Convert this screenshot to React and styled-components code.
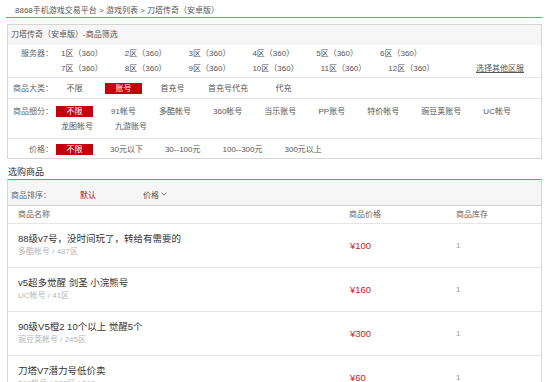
import React from "react"
import styled, { createGlobalStyle } from "styled-components"

const colors = {
  text: "#333",
  body: "#555",
  label: "#666",
  light: "#b5b5b5",
  border: "#d6d6d6",
  line: "#e6e6e6",
  red: "#c4000b",
  price: "#c41a20",
  headBg: "#f6f6f6",
}

const serverLines = [
  ["1区（360）", "2区（360）", "3区（360）", "4区（360）", "5区（360）", "6区（360）"],
  ["7区（360）", "8区（360）", "9区（360）", "10区（360）", "11区（360）", "12区（360）"],
]

const filterRows = [
  {
    label: "商品大类：",
    pad: "3px 0 2px",
    items: ["不限", "账号", "首充号", "首充号代充", "代充"],
    active: 1,
  },
  {
    label: "商品细分：",
    pad: "5px 0 4px",
    items: [
      "不限", "91帐号", "多酷帐号", "360帐号", "当乐账号", "PP账号",
      "特价帐号", "豌豆荚账号", "UC帐号", "龙图帐号", "九游账号",
    ],
    active: 0,
  },
  {
    label: "价格：",
    pad: "3px 0 1px",
    items: ["不限", "30元以下", "30--100元", "100--300元", "300元以上"],
    active: 0,
  },
]

const goods = [
  { title: "88级v7号，没时间玩了，转给有需要的", sub: "多酷帐号 / 487区", price: "¥100", stock: 1 },
  { title: "v5超多觉醒 剑圣 小浣熊号", sub: "UC帐号 / 41区", price: "¥160", stock: 1 },
  { title: "90级V5橙2 10个以上 觉醒5个", sub: "豌豆荚帐号 / 245区", price: "¥300", stock: 1 },
  { title: "刀塔V7潜力号低价卖", sub: "360帐号 / 332区 / 360 ", price: "¥60", stock: 1 },
]

const ChevronDown = () => (
  <svg width="6" height="4" viewBox="0 0 6 4">
    <polyline points="0.5,0.8 3,3.2 5.5,0.8" fill="none" stroke="#777" strokeWidth="1" />
  </svg>
)

const App = () => {
  return (
    <>
      <GlobalStyle />
      <Page>
        <Breadcrumb>8868手机游戏交易平台 &gt; 游戏列表 &gt; 刀塔传奇（安卓版）</Breadcrumb>

        <FilterBox>
          <FilterHead>刀塔传奇（安卓版）-商品筛选</FilterHead>
          <FilterRow $pad="1px 0 1px">
            <Label>服务器：</Label>
            <ServerLines>
              {serverLines.map((line, i) => (
                <ServerLine key={i}>
                  {line.map((s) => (
                    <ServerItem key={s}>{s}</ServerItem>
                  ))}
                  {i === 1 && <ServerLink>选择其他区服</ServerLink>}
                </ServerLine>
              ))}
            </ServerLines>
          </FilterRow>
          {filterRows.map((row) => (
            <FilterRow key={row.label} $pad={row.pad}>
              <Label>{row.label}</Label>
              <Tags>
                {row.items.map((t, i) => (
                  <Tag key={t} $active={i === row.active}>
                    {t}
                  </Tag>
                ))}
              </Tags>
            </FilterRow>
          ))}
        </FilterBox>

        <SectionTitle>选购商品</SectionTitle>
        <ListBox>
          <SortBar>
            <SortLabel>商品排序：</SortLabel>
            <SortOption $active>默认</SortOption>
            <SortOption>
              价格 <ChevronDown />
            </SortOption>
          </SortBar>
          <HeadRow>
            <HeadCell $first>商品名称</HeadCell>
            <HeadCell>商品价格</HeadCell>
            <HeadCell>商品库存</HeadCell>
          </HeadRow>
          {goods.map((g) => (
            <GoodsRow key={g.title}>
              <NameCell>
                <GoodsTitle>{g.title}</GoodsTitle>
                <GoodsSub>{g.sub}</GoodsSub>
              </NameCell>
              <Price>{g.price}</Price>
              <Stock>{g.stock}</Stock>
            </GoodsRow>
          ))}
        </ListBox>
      </Page>
    </>
  )
}

export default App

const GlobalStyle = createGlobalStyle`
  html, body {
    margin: 0;
    padding: 0;
    background: #fff;
  }
  body {
    font-family: "Liberation Sans", "Noto Sans CJK SC", sans-serif;
    font-size: 8px;
    color: ${colors.body};
  }
`
const Page = styled.div`
  width: 554px;
  height: 382px;
  overflow: hidden;
  box-sizing: border-box;
  padding: 0 12px 0 7px;
`
const Breadcrumb = styled.div`
  height: 13px;
  padding: 4px 0 0 9px;
  line-height: 13px;
  font-size: 8px;
  color: ${colors.body};
  border-bottom: 1px solid #d8716f;
  margin-left: -1px;
`
const FilterBox = styled.div`
  margin-top: 6px;
  border: 1px solid ${colors.border};
`
const FilterHead = styled.div`
  height: 20px;
  line-height: 20px;
  padding-left: 3px;
  background: ${colors.headBg};
  color: ${colors.body};
`
const FilterRow = styled.div`
  display: flex;
  align-items: flex-start;
  padding: ${(p) => p.$pad};
  border-bottom: 1px solid ${colors.line};
  &:last-child {
    border-bottom: none;
  }
`
const Label = styled.div`
  width: 45px;
  flex-shrink: 0;
  text-align: right;
  line-height: 15px;
  color: ${colors.label};
`
const ServerLines = styled.div`
  flex: 1;
  margin-left: 3px;
`
const ServerLine = styled.div`
  display: flex;
  line-height: 15px;
`
const ServerItem = styled.span`
  padding: 0 5px;
  margin-right: 12px;
  white-space: nowrap;
`
const ServerLink = styled.a`
  margin-left: auto;
  margin-right: 17px;
  color: ${colors.body};
  text-decoration: underline;
`
const Tags = styled.div`
  flex: 1;
  display: flex;
  flex-wrap: wrap;
  margin-left: 3px;
`
const Tag = styled.span`
  display: inline-block;
  min-width: 37px;
  box-sizing: border-box;
  height: 11px;
  line-height: 11px;
  margin: 2px 12px 2px 0;
  padding: 0 5px;
  text-align: center;
  white-space: nowrap;
  background: ${(p) => (p.$active ? colors.red : "transparent")};
  color: ${(p) => (p.$active ? "#fff" : colors.body)};
`
const SectionTitle = styled.div`
  padding: 7px 0 1px 1px;
  line-height: 12px;
  font-size: 9px;
  color: ${colors.text};
`
const ListBox = styled.div`
  border: 1px solid ${colors.border};
  border-top: 1px solid #cf6a79;
`
const SortBar = styled.div`
  display: flex;
  align-items: center;
  height: 22px;
  padding: 3px 0 0 3px;
  background: ${colors.headBg};
  border-bottom: 1px solid ${colors.border};
`
const SortLabel = styled.span`
  width: 69px;
  color: ${colors.label};
`
const SortOption = styled.span`
  display: flex;
  align-items: center;
  gap: 2px;
  width: 63px;
  color: ${(p) => (p.$active ? colors.red : colors.body)};
`
const HeadRow = styled.div`
  display: grid;
  grid-template-columns: 341px 107px 1fr;
  height: 17px;
  line-height: 17px;
  border-bottom: 1px solid ${colors.line};
`
const HeadCell = styled.div`
  padding-left: ${(p) => (p.$first ? "10px" : "0")};
  color: ${colors.label};
`
const GoodsRow = styled.div`
  display: grid;
  grid-template-columns: 341px 107px 1fr;
  align-items: center;
  height: 43px;
  border-bottom: 1px solid ${colors.line};
`
const NameCell = styled.div`
  align-self: start;
  padding: 8px 0 0 10px;
`
const GoodsTitle = styled.div`
  line-height: 14px;
  font-size: 9.5px;
  color: ${colors.text};
`
const GoodsSub = styled.div`
  line-height: 12px;
  font-size: 8px;
  color: ${colors.light};
`
const Price = styled.div`
  padding-left: 1px;
  font-size: 9.5px;
  color: ${colors.price};
`
const Stock = styled.div`
  font-size: 8px;
  color: #999;
`
